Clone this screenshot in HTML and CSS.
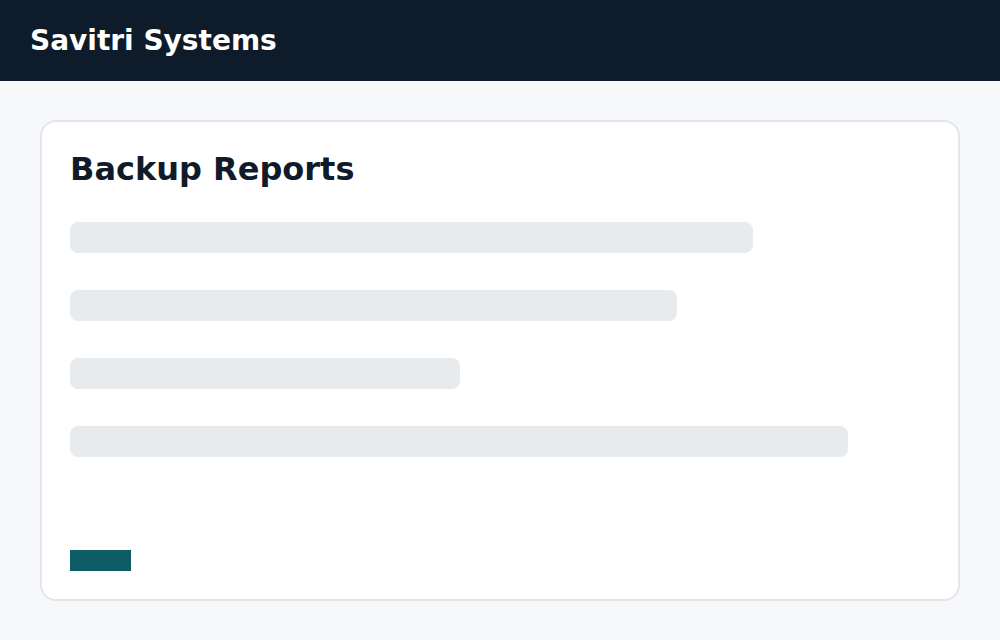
FILE: index.html
```html
<!DOCTYPE html>
<html lang="en">
<head>
<meta charset="utf-8">
<title>Savitri Systems — Backup Reports</title>
<link rel="stylesheet" href="styles.css">
</head>
<body>
<header class="topbar">
  <div class="brand">Savitri Systems</div>
</header>
<main class="content">
  <section class="card">
    <h1 class="card-title">Backup Reports</h1>
    <div class="skeleton-list">
      <div class="skeleton-bar" style="width: 683px"></div>
      <div class="skeleton-bar" style="width: 607px"></div>
      <div class="skeleton-bar" style="width: 390px"></div>
      <div class="skeleton-bar" style="width: 778px"></div>
    </div>
    <div class="action-chip"></div>
  </section>
</main>
</body>
</html>
```

FILE: styles.css
```css
* { box-sizing: border-box; }

html, body {
  margin: 0;
  padding: 0;
}

body {
  background: #f7f8fa;
  font-family: "DejaVu Sans", "Liberation Sans", sans-serif;
  width: 1000px;
  height: 640px;
  overflow: hidden;
}

.topbar {
  height: 81px;
  background: #0e1b2b;
  display: flex;
  align-items: center;
  padding-left: 30px;
}

.brand {
  color: #ffffff;
  font-size: 28px;
  font-weight: bold;
}

.content {
  padding: 39px 40px 40px 40px;
}

.card {
  height: 481px;
  background: #ffffff;
  border: 2px solid #e2e5e9;
  border-radius: 16px;
  padding: 28px 28px 28px 28px;
  display: flex;
  flex-direction: column;
}

.card-title {
  margin: 0;
  font-size: 32px;
  font-weight: bold;
  color: #0f1b2b;
  line-height: 38px;
}

.skeleton-list {
  margin-top: 34px;
  display: flex;
  flex-direction: column;
  gap: 37px;
}

.skeleton-bar {
  height: 31px;
  background: #e8ebee;
  border-radius: 8px;
}

.action-chip {
  margin-top: auto;
  width: 61px;
  height: 21px;
  background: #0e5c66;
}
```
